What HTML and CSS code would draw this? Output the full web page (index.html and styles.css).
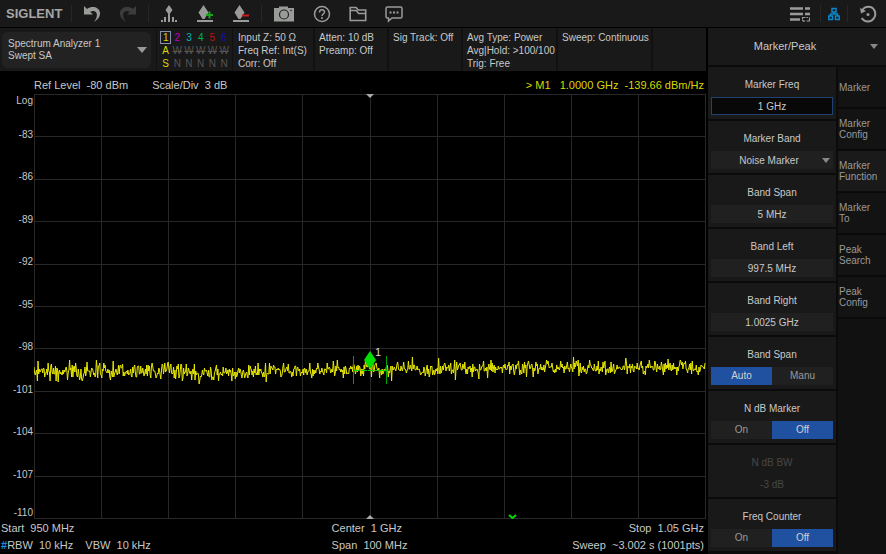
FILE: index.html
```html
<!DOCTYPE html>
<html lang="en">
<head>
<meta charset="utf-8">
<title>Spectrum Analyzer</title>
<link rel="stylesheet" href="styles.css">
</head>
<body>
<header class="topbar">
  <div class="logo">SIGLENT</div>
  <span class="sep"></span>
  <button class="tool" aria-label="Undo"><svg width="18" height="18" viewBox="0 0 18 18"><path d="M1 1v8.500h9L7.200 6.800c4-2 8 0 6.300 5.700-.5 1.800-1.500 3-2.500 4.500C15 14.500 17.500 11 17 7.500 16 2 9 .5 4 4z" fill="#999b99"/></svg></button>
  <button class="tool" aria-label="Redo" disabled><svg width="18" height="18" viewBox="0 0 18 18"><path d="M17 1v8.500H8l2.800-2.700c-4-2-8 0-6.300 5.700.5 1.800 1.500 3 2.500 4.500C3 14.500.5 11 1 7.500 2 2 9 .5 14 4z" fill="#3b3d3b"/></svg></button>
  <span class="sep"></span>
  <button class="tool" aria-label="Peak"><svg width="18" height="18" viewBox="0 0 18 18" fill="#999b99"><path d="M9 0l3.500 5L9 10 5.500 5zM8 9h2v8H8zM1 15h2v2H1zM4 12h2v5H4zM12 12h2v5h-2zM15 15h2v2h-2z"/></svg></button>
  <button class="tool" aria-label="Add marker"><svg width="18" height="18" viewBox="0 0 18 18"><path d="M7.500 0l5 7.500-4 6.500h-2l-4-6.500zM1 15h16v2H1z" fill="#999b99"/><path d="M10 10h7M13.500 6.500v7" stroke="#1aa51a" stroke-width="2"/></svg></button>
  <button class="tool" aria-label="Remove marker"><svg width="18" height="18" viewBox="0 0 18 18"><path d="M7.500 0l5 7.500-4 6.500h-2l-4-6.500zM1 15h16v2H1z" fill="#999b99"/><path d="M10 10.500h7" stroke="#c51d1d" stroke-width="2"/></svg></button>
  <span class="sep"></span>
  <button class="tool wide" aria-label="Screenshot"><svg width="20" height="18" viewBox="0 0 20 18"><path d="M0 3h5V1.500h9V3h6v13.500H0z" fill="#999b99"/><circle cx="10" cy="9.500" r="4.500" fill="#999b99" stroke="#222" stroke-width="1.200"/><circle cx="17" cy="5.500" r=".8" fill="#222"/></svg></button>
  <button class="tool" aria-label="Help"><svg width="18" height="18" viewBox="0 0 18 18" fill="none" stroke="#999b99"><circle cx="9" cy="9" r="7.500" stroke-width="1.500"/><path d="M6.500 7.500C6.500 4 11.500 4 11.500 7c0 2-2.500 2-2.500 4M9 12v2" stroke-width="1.500"/></svg></button>
  <button class="tool" aria-label="Files"><svg width="18" height="18" viewBox="0 0 18 18" fill="none" stroke="#999b99" stroke-width="1.600"><path d="M1.200 15.500V2.500h6l2 2.500h7.500v10.500zM1.200 5.500h6l2.500 3h7"/></svg></button>
  <button class="tool" aria-label="Messages"><svg width="18" height="18" viewBox="0 0 18 18"><path d="M2.500 2h13q1.500 0 1.500 1.500v8q0 1.500-1.500 1.500H7l-3.500 3v-3h-1Q1 13 1 11.500v-8Q1 2 2.500 2z" fill="none" stroke="#999b99" stroke-width="1.500"/><path d="M4.500 6.500h2v2h-2zM8 6.500h2v2H8zM11.500 6.500h2v2h-2z" fill="#999b99"/></svg></button>
  <span class="spacer"></span>
  <button class="tool" aria-label="Task list"><svg width="20" height="18" viewBox="0 0 20 18"><path d="M0 3.500h13M0 9h13M0 14.500h10M15 3.500h5M15 9h5" stroke="#999b99" stroke-width="2.500"/><path d="M12.500 14v-1.500h3M19.500 12.500v3.500h-3M12.500 14.500q0 2 2.500 1.500M16.500 12.500h1.500" fill="none" stroke="#999b99" stroke-width="1.200"/></svg></button>
  <span class="sep"></span>
  <button class="tool net" aria-label="Network"><svg width="12" height="14" viewBox="0 0 12 14" fill="none" stroke="#0c87cc" stroke-width="1.500"><path d="M4 1.500h4v3.500H4zM.8 9h3.700v3.500H.8zM7.500 9h3.700v3.500H7.500zM6 5v2M2.500 9V7h7v2"/></svg></button>
  <span class="sep"></span>
  <button class="tool" aria-label="Preset"><svg width="18" height="18" viewBox="0 0 18 18"><path d="M3 5.500C6 .5 13 .5 15.500 5.500 18 11 14 16.500 9 16.500c-3 0-5-1.500-6.300-3.500" fill="none" stroke="#999b99" stroke-width="2"/><path d="M1 3l1 5.500L7 6z" fill="#999b99"/><circle cx="9" cy="9.500" r="1.500" fill="#999b99"/></svg></button>
</header>

<div class="workspace">
  <main class="main">
    <section class="status">
      <button class="mode"><span>Spectrum Analyzer 1<br>Swept SA</span><i class="caret"></i></button>
      <table class="traces" aria-label="Traces">
        <tr><td class="t1 sel">1</td><td class="t2">2</td><td class="t3">3</td><td class="t4">4</td><td class="t5">5</td><td class="t6">6</td></tr>
        <tr><td class="t1">A</td><td><s>W</s></td><td><s>W</s></td><td><s>W</s></td><td><s>W</s></td><td><s>W</s></td></tr>
        <tr><td class="t1">S</td><td>N</td><td>N</td><td>N</td><td>N</td><td>N</td></tr>
      </table>
      <div class="info input">Input Z: 50 Ω<br>Freq Ref: Int(S)<br>Corr: Off</div>
      <div class="info atten">Atten: 10 dB<br>Preamp: Off</div>
      <div class="info atten">Sig Track: Off</div>
      <div class="info avg">Avg Type: Power<br>Avg|Hold: &gt;100/100<br>Trig: Free</div>
      <div class="info avg">Sweep: Continuous</div>
      <div class="info rest"></div>
    </section>
    <section class="levels">
      <span class="ref">Ref Level&nbsp; -80 dBm</span>
      <span>Scale/Div&nbsp; 3 dB</span>
      <span class="readout">&gt; M1 &nbsp; 1.0000 GHz&nbsp; -139.66 dBm/Hz</span>
    </section>
    <section class="plot">
      <div class="axis">
        <div><span class="log">Log</span><span>-83</span></div>
        <div>-86</div><div>-89</div><div>-92</div><div>-95</div><div>-98</div><div>-101</div><div>-104</div><div>-107</div><div>-110</div>
      </div>
      <svg class="graph" viewBox="0 0 672 425" preserveAspectRatio="none">
        <path id="grid" class="grid"/>
        <path id="trace" class="trace"/>
        <path class="band" d="M319.500 262v28M352.500 262v28"/>
        <path class="band dash" d="M320 276.500h33"/>
        <path class="diamond" d="M336 257l6 9-6 9-6-9z"/>
        <path class="tick" d="M332 0h8l-4 4zM332 425h8l-4-4z"/>
        <path class="chevron" d="M475 421l3.500 3 3.500-3"/>
        <text class="mark" x="341" y="262">1</text>
      </svg>
    </section>
    <footer class="foot">
      <span>Start&nbsp; 950 MHz</span><span class="mid">Center&nbsp; 1 GHz</span><span class="end">Stop&nbsp; 1.05 GHz</span>
      <span><b class="hash">#</b>RBW&nbsp; 10 kHz &nbsp;&nbsp; VBW&nbsp; 10 kHz</span><span class="mid">Span&nbsp; 100 MHz</span><span class="end">Sweep&nbsp; ~3.002 s (1001pts)</span>
    </footer>
  </main>

  <aside class="side">
    <div class="menu pick"><select aria-label="Menu"><option>Marker/Peak</option></select><i class="caret"></i></div>
    <div class="cards">
      <div class="card"><label for="mf">Marker Freq</label><input id="mf" class="field focus" value="1 GHz"></div>
      <div class="card"><label for="mb">Marker Band</label><div class="pick"><select id="mb" class="field"><option>Noise Marker</option></select><i class="caret"></i></div></div>
      <div class="card"><label for="bs">Band Span</label><input id="bs" class="field" value="5 MHz"></div>
      <div class="card"><label for="bl">Band Left</label><input id="bl" class="field" value="997.5 MHz"></div>
      <div class="card"><label for="br">Band Right</label><input id="br" class="field" value="1.0025 GHz"></div>
      <div class="card" role="radiogroup" aria-labelledby="ga"><span id="ga">Band Span</span><div class="toggle"><label><input type="radio" name="a" checked>Auto</label><label><input type="radio" name="a">Manu</label></div></div>
      <div class="card" role="radiogroup" aria-labelledby="gb"><span id="gb">N dB Marker</span><div class="toggle"><label><input type="radio" name="b">On</label><label><input type="radio" name="b" checked>Off</label></div></div>
      <div class="card off"><label for="bw">N dB BW</label><input id="bw" class="field" value="-3 dB" disabled></div>
      <div class="card" role="radiogroup" aria-labelledby="gc"><span id="gc">Freq Counter</span><div class="toggle"><label><input type="radio" name="c">On</label><label><input type="radio" name="c" checked>Off</label></div></div>
    </div>
    <nav class="tabs">
      <button>Marker</button>
      <button>Marker<br>Config</button>
      <button class="active">Marker<br>Function</button>
      <button>Marker<br>To</button>
      <button>Peak<br>Search</button>
      <button>Peak<br>Config</button>
    </nav>
  </aside>
</div>
<script src="plot.js"></script>
</body>
</html>
```
FILE: styles.css
```css
* { box-sizing: border-box; }
body {
  margin: 0;
  min-height: 100vh;
  display: flex;
  flex-direction: column;
  gap: 1px;
  background: #000;
  color: #c8c8c8;
  font: 10px/13px "Liberation Sans", Arial, sans-serif;
}
button, input, select { font: inherit; color: inherit; border: 0; margin: 0; padding: 0; background: none; border-radius: 0; }
select { appearance: none; text-align: center; text-align-last: center; width: 100%; }

.topbar { display: flex; align-items: center; height: 27px; background: #191919; }
.logo { width: 69px; padding-left: 6px; font-size: 13px; font-weight: bold; color: #a6a6a6; }
.sep { width: 1px; height: 17px; margin: 0 2px; background: #262626; }
.tool { width: 36px; height: 26px; display: flex; align-items: center; justify-content: center; }
.wide { width: 40px; }
.net { width: 22px; }
.spacer { flex: 1; }

.workspace { flex: 1; display: grid; grid-template-columns: 1fr 178px; gap: 2px; }
.main { display: flex; flex-direction: column; min-width: 0; }

.status { display: flex; height: 43px; background: #191919; }
.mode {
  display: flex; align-items: center; justify-content: space-between;
  width: 149px; height: 36px; margin: 4px 5px 3px 2px; padding: 0 4px 0 6px;
  border-radius: 6px; background: #222; text-align: left; line-height: 12px;
}
.caret { border: 5px solid transparent; border-top: 6px solid #999; border-bottom: 0; }
.traces { width: 77px; height: 43px; padding: 3px 2px 1px 3px; border: solid #111; border-width: 0 1px; border-spacing: 0; color: #555; }
.traces td { width: 12px; height: 13px; padding: 0; text-align: center; line-height: 13px; }
.traces .t1 { color: #d8d800; }
.traces .sel { outline: 1px solid #8890a8; outline-offset: -1px; }
.t2 { color: #c000c0; }
.t3 { color: #00b8b8; }
.t4 { color: #00b850; }
.t5 { color: #c01010; }
.t6 { color: #1010b8; }
.info { padding: 3px 0 0 4px; border-right: 2px solid #111; white-space: nowrap; }
.input { width: 82px; padding-left: 5px; }
.atten { width: 74px; }
.avg { width: 95px; }
.rest { flex: 1; border: 0; }

.levels { display: flex; gap: 24px; height: 23px; padding: 6px 2px 0 34px; font-size: 11px; line-height: 16px; white-space: nowrap; }
.readout { margin-left: auto; color: #d8d800; }

.plot { flex: 1; display: flex; min-height: 200px; }
.axis { width: 34px; display: flex; flex-direction: column; text-align: right; padding-right: 1px; line-height: 5px; }
.axis > div { flex: 1; display: flex; flex-direction: column; justify-content: flex-end; }
.axis > div:first-child { justify-content: space-between; }
.axis > div:last-child, .axis .log { line-height: 13px; }
.graph { flex: 1; width: 0; min-width: 0; height: 100%; min-height: 425px; }
.graph path { fill: none; vector-effect: non-scaling-stroke; }
.graph .grid { stroke: #282828; shape-rendering: crispEdges; }
.graph .trace { stroke: #e8e800; }
.graph .band { stroke: #00a000; }
.graph .dash { stroke: #00d000; stroke-dasharray: 6 1; }
.graph .diamond { fill: #00e000; }
.graph .tick { fill: #aaa; }
.graph .chevron { stroke: #00e000; stroke-width: 2; }
.mark { fill: #ddd; font-size: 11px; }

.foot {
  display: grid; grid-template-columns: 1fr auto 1fr; padding: 1px 2px 0 1px;
  font-size: 11px; line-height: 17px; white-space: nowrap;
}
.mid { margin-left: 34px; }
.end { text-align: right; }
.hash { color: #1090e0; }

.side { display: grid; grid-template-columns: 128px 1fr; grid-template-rows: 37px 1fr; gap: 2px; background: #0b0b0b; }
.menu { grid-column: 1 / 3; background: #191919; font-size: 11px; }
.menu select { height: 37px; padding-right: 24px; }
.pick { position: relative; }
.pick .field { padding-right: 6px; }
.pick .caret { position: absolute; right: 3px; top: 7px; border-width: 5px 4px 0; border-top-color: #888; }
.menu .caret { right: 8px; top: 16px; }
.cards { display: flex; flex-direction: column; gap: 2px; }
.card { height: 52px; padding: 11px 3px 0; background: #191919; text-align: center; }
.card > label, .card > span { display: block; line-height: 14px; margin-bottom: 5px; }
.field { display: block; width: 100%; height: 18px; background: #202020; text-align: center; }
.focus { background: #080808; border: 1px solid #1f4272; }
.off, .off .field { color: #474747; background: #191919; }
.toggle { display: flex; height: 18px; line-height: 18px; }
.toggle label { flex: 1; background: #202020; color: #999; }
.toggle label:has(:checked) { background: #2050a0; color: #d0d0d0; }
.toggle input { appearance: none; position: absolute; }
.tabs { display: flex; flex-direction: column; gap: 2px; background: #111; }
.tabs button { height: 40px; padding-left: 1px; text-align: left; line-height: 11px; color: #999; background: #131313; box-shadow: 0 2px #0a0a0a; }
.tabs .active { background: #1a1a1a; }
```
FILE: plot.js
```js
const W = 672, H = 425;

let grid = "";
for (let i = 0; i <= 10; i++) {
  const x = Math.round(i * (W - 1) / 10) + 0.5;
  const y = Math.round(i * (H - 1) / 10) + 0.5;
  grid += `M${x} 0V${H}M0 ${y}H${W}`;
}
document.getElementById("grid").setAttribute("d", grid);

// Mean noise level along the sweep, as [x, y] knots.
const mean = [[0, 277], [130, 277], [162, 279], [220, 278], [290, 275], [400, 275], [500, 274], [672, 273]];
// Single deep or high samples: [x, y].
const spikes = [[3, 287], [4, 267], [22, 287], [48, 287], [62, 266], [134, 268], [165, 290], [345, 284], [357, 287], [378, 263], [404, 264], [421, 286]];

function level(x) {
  const i = Math.max(1, mean.findIndex(k => k[0] >= x));
  const [a, b] = [mean[i - 1], mean[i]];
  return a[1] + (b[1] - a[1]) * (x - a[0]) / (b[0] - a[0]);
}

let seed = 7;
const rnd = () => (seed = (seed * 16807) % 2147483647) / 2147483647;

let d = "";
let next = 0;
for (let i = 0; i <= 1000; i++) {
  const x = i * (W - 1) / 1000;
  let y = level(x) + (rnd() + rnd() + rnd() + rnd() - 2) * 6.5;
  if (next < spikes.length && x >= spikes[next][0]) y = spikes[next++][1];
  d += (i ? "L" : "M") + x.toFixed(1) + " " + Math.round(y);
}
document.getElementById("trace").setAttribute("d", d);
```
